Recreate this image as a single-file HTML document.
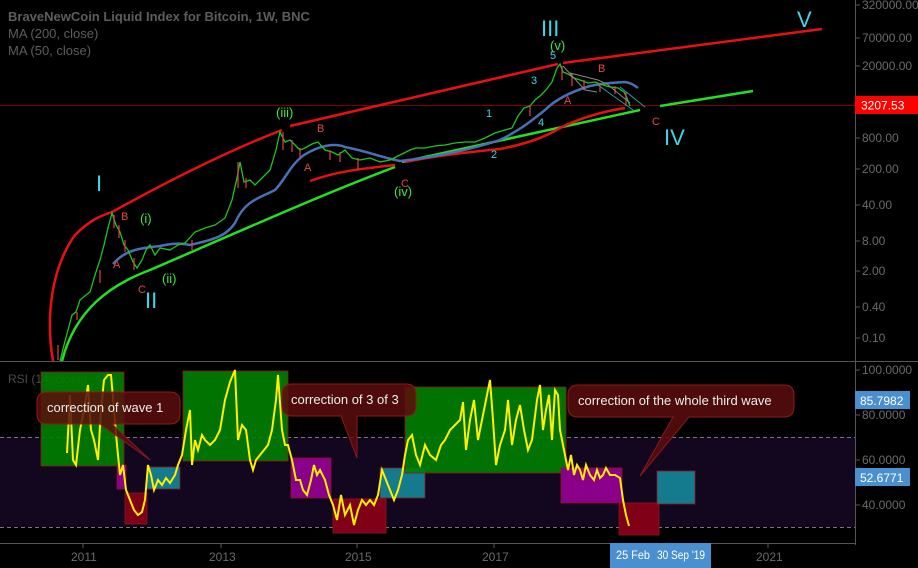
<!DOCTYPE html>
<html><head><meta charset="utf-8"><style>
html,body{margin:0;padding:0;background:#000;}
svg{display:block;font-family:"Liberation Sans",sans-serif;}
</style></head><body>
<svg width="918" height="568" viewBox="0 0 918 568" xmlns="http://www.w3.org/2000/svg">
<rect width="918" height="568" fill="#000"/>
<text x="8" y="21" font-size="13" fill="#5d5d5d" font-weight="bold">BraveNewCoin Liquid Index for Bitcoin, 1W, BNC</text>
<text x="8" y="38" font-size="13" fill="#5d5d5d">MA (200, close)</text>
<text x="8" y="55" font-size="13" fill="#5d5d5d">MA (50, close)</text>
<line x1="0" y1="105.5" x2="855" y2="105.5" stroke="#7a0000" stroke-width="1"/>
<line x1="855.5" y1="0" x2="855.5" y2="545" stroke="#555" stroke-width="1"/>
<line x1="0" y1="361.5" x2="918" y2="361.5" stroke="#555" stroke-width="1"/>
<line x1="0" y1="543.5" x2="855" y2="543.5" stroke="#555" stroke-width="1"/>
<g font-size="12" fill="#6a6a6a">
<text x="862" y="9">320000.00</text>
<text x="862" y="42">70000.00</text>
<text x="862" y="70">20000.00</text>
<text x="862" y="142">800.00</text>
<text x="862" y="173">200.00</text>
<text x="862" y="209">40.00</text>
<text x="862" y="245">8.00</text>
<text x="862" y="275">2.00</text>
<text x="862" y="311">0.40</text>
<text x="862" y="342">0.10</text>
<text x="862" y="374">100.0000</text>
<text x="862" y="419">80.0000</text>
<text x="862" y="464">60.0000</text>
<text x="862" y="509">40.0000</text>
</g>
<g stroke="#555"><line x1="855" y1="5" x2="860" y2="5"/><line x1="855" y1="38" x2="860" y2="38"/><line x1="855" y1="66" x2="860" y2="66"/><line x1="855" y1="138" x2="860" y2="138"/><line x1="855" y1="169" x2="860" y2="169"/><line x1="855" y1="205" x2="860" y2="205"/><line x1="855" y1="241" x2="860" y2="241"/><line x1="855" y1="271" x2="860" y2="271"/><line x1="855" y1="307" x2="860" y2="307"/><line x1="855" y1="338" x2="860" y2="338"/><line x1="855" y1="370" x2="860" y2="370"/><line x1="855" y1="415" x2="860" y2="415"/><line x1="855" y1="460" x2="860" y2="460"/><line x1="855" y1="505" x2="860" y2="505"/></g>
<rect x="855" y="96" width="63" height="18" fill="#f00"/>
<text x="861" y="109.5" font-size="12" fill="#fff">3207.53</text>
<rect x="855" y="391" width="55" height="18" fill="#4a8fcf"/>
<text x="860" y="405" font-size="12" fill="#fff">85.7982</text>
<rect x="855" y="468" width="55" height="18" fill="#4a8fcf"/>
<text x="860" y="482" font-size="12" fill="#fff">52.6771</text>
<g font-size="12" fill="#6a6a6a">
<text x="71" y="561">2011</text><text x="209" y="561">2013</text><text x="345" y="561">2015</text><text x="482" y="561">2017</text><text x="756" y="561">2021</text>
</g>
<g stroke="#555"><line x1="83" y1="543" x2="83" y2="548"/><line x1="221" y1="543" x2="221" y2="548"/><line x1="357" y1="543" x2="357" y2="548"/><line x1="494" y1="543" x2="494" y2="548"/><line x1="768" y1="543" x2="768" y2="548"/></g>
<rect x="610" y="543" width="101" height="25" fill="#4a8fcf"/>
<text x="616" y="559" font-size="12" fill="#fff" textLength="34" lengthAdjust="spacingAndGlyphs">25 Feb</text>
<text x="657" y="559" font-size="12" fill="#fff" textLength="48" lengthAdjust="spacingAndGlyphs">30 Sep '19</text>

<path d="M53,361 C46,320 50,270 75,235 C90,220 100,216 112,212 C170,180 230,150 282,130" fill="none" stroke="#e81010" stroke-width="2.5"/>
<path d="M290,126 L558,64" stroke="#e81010" stroke-width="2.5"/>
<path d="M563,63 L822,29" stroke="#e81010" stroke-width="2.5"/>
<path d="M62,361 C75,310 110,285 150,270 C220,240 320,195 395,167" fill="none" stroke="#22e022" stroke-width="2.5"/>
<path d="M402,162 L640,110 M660,106 L753,91" stroke="#22e022" stroke-width="2.5"/>
<path d="M310,181 C340,170 370,168 395,165 M405,162 C440,155 470,152 500,149 C520,145 540,140 560,128 C580,118 600,112 625,108" fill="none" stroke="#e81010" stroke-width="2.5"/>
<path d="M113,264 C125,250 140,248 160,246 C175,243 180,243 190,245 C210,240 225,238 235,223 C245,200 260,198 275,190 C285,180 290,165 304,155 C320,145 335,143 345,147 C370,152 380,157 400,161 C430,158 470,150 500,140 C520,130 530,122 545,110 C555,100 570,92 590,86 C610,82 615,83 625,82 C632,83 635,86 638,88" fill="none" stroke="#4a6fb5" stroke-width="2.5"/>
<polyline points="60,361 64,345 68,330 72,315 76,312 80,300 86,295 90,292 95,275 100,260 104,245 108,228 112,213 116,225 120,232 124,245 128,250 133,262 137,268 142,260 146,250 150,245 155,255 160,248 170,250 178,245 185,243 195,232 205,228 215,225 225,218 232,200 237,178 240,162 244,182 250,180 255,185 262,178 270,170 276,150 280,132 285,142 290,140 295,145 300,150 305,148 312,144 318,142 325,150 332,152 338,155 345,150 352,158 360,160 370,158 380,162 390,160 400,155 410,150 416,148 425,148 435,146 445,145 455,143 465,142 475,142 485,138 495,133 505,130 512,128 518,116 524,108 530,106 535,100 540,96 546,90 552,82 557,68 560,64 563,72 568,74 574,78 580,80 588,83 595,82 603,85 610,87 618,88 624,92 627,98 630,106" fill="none" stroke="#1ec51e" stroke-width="1.3"/>
<g stroke="#e04444" stroke-width="1.2">
<line x1="114" y1="215" x2="114" y2="228"/><line x1="119" y1="225" x2="119" y2="238"/><line x1="125" y1="240" x2="125" y2="252"/><line x1="134" y1="258" x2="134" y2="270"/><line x1="58" y1="345" x2="58" y2="360"/><line x1="77" y1="312" x2="77" y2="320"/><line x1="100" y1="270" x2="100" y2="283"/><line x1="238" y1="162" x2="238" y2="188"/><line x1="246" y1="178" x2="246" y2="188"/><line x1="283" y1="132" x2="283" y2="150"/><line x1="292" y1="140" x2="292" y2="152"/><line x1="300" y1="148" x2="300" y2="158"/><line x1="330" y1="150" x2="330" y2="160"/><line x1="340" y1="152" x2="340" y2="162"/><line x1="358" y1="158" x2="358" y2="170"/><line x1="192" y1="240" x2="192" y2="250"/><line x1="530" y1="105" x2="530" y2="116"/><line x1="562" y1="66" x2="562" y2="80"/><line x1="572" y1="74" x2="572" y2="86"/><line x1="584" y1="80" x2="584" y2="90"/><line x1="600" y1="83" x2="600" y2="92"/><line x1="615" y1="86" x2="615" y2="94"/><line x1="626" y1="92" x2="626" y2="106"/>
</g>
<path d="M563,66 L585,90 L597,92 M570,73 L598,80 L607,84 L630,103" fill="none" stroke="#888" stroke-width="1"/>
<path d="M620,87 L645,107 M598,85 L633,110" fill="none" stroke="#2a9b9b" stroke-width="1"/>

<g font-size="22" fill="#3dd6e6">
<text x="96" y="191">I</text><text x="145" y="308">II</text><text x="541" y="36">III</text><text x="664" y="145">IV</text><text x="797" y="27">V</text>
</g>
<g font-size="13" fill="#3ee83e">
<text x="140" y="223">(i)</text><text x="162" y="283">(ii)</text><text x="276" y="117">(iii)</text><text x="394" y="196">(iv)</text><text x="550" y="50">(v)</text>
</g>
<g font-size="11" fill="#e04848">
<text x="121" y="220">B</text><text x="113" y="268">A</text><text x="138" y="293">C</text><text x="317" y="132">B</text><text x="304" y="171">A</text><text x="401" y="187">C</text><text x="598" y="72">B</text><text x="564" y="104">A</text><text x="652" y="125">C</text>
</g>
<g font-size="11" fill="#3dd6e6">
<text x="486" y="117">1</text><text x="491" y="158">2</text><text x="531" y="84">3</text><text x="538" y="126">4</text><text x="550" y="59">5</text>
</g>

<rect x="0" y="437" width="855" height="90" fill="#13061f"/>
<line x1="0" y1="437.5" x2="855" y2="437.5" stroke="#777" stroke-dasharray="4,3"/>
<line x1="0" y1="527.5" x2="855" y2="527.5" stroke="#777" stroke-dasharray="4,3"/>
<text x="8" y="383" font-size="12" fill="#4a4a4a">RSI (14, close)</text>
<g stroke="#8b1a1a" stroke-width="0.8">
<rect x="41" y="372" width="83" height="94" fill="#008000" fill-opacity="0.9"/>
<rect x="117" y="465" width="9" height="24" fill="#8b008b"/>
<rect x="125" y="493" width="22" height="31" fill="#800017"/>
<rect x="147" y="467" width="33" height="22" fill="#147a8e"/>
<rect x="183" y="371" width="105" height="90" fill="#008000" fill-opacity="0.9"/>
<rect x="291" y="458" width="40" height="40" fill="#8b008b"/>
<rect x="333" y="499" width="53" height="34" fill="#800017"/>
<rect x="380" y="468" width="45" height="30" fill="#147a8e"/>
<rect x="405" y="387" width="161" height="86" fill="#008000" fill-opacity="0.9"/>
<rect x="561" y="468" width="61" height="35" fill="#8b008b"/>
<rect x="619" y="503" width="40" height="32" fill="#800017"/>
<rect x="657" y="471" width="38" height="33" fill="#147a8e"/>
</g>
<polyline points="67,453 70,395 73,460 76,465 80,430 84,410 88,385 91,430 94,440 98,460 101,410 104,380 108,375 111,375 114,410 117,445 120,475 123,465 126,490 130,500 134,510 138,515 142,512 145,500 148,465 151,475 154,490 158,480 162,485 166,478 170,483 175,475 178,465 182,455 186,430 190,410 192,465 195,440 198,450 202,435 205,440 210,445 215,440 220,430 225,400 230,382 235,370 238,440 242,425 246,430 250,460 253,470 256,460 260,455 264,450 268,445 272,430 276,400 278,375 282,430 285,445 288,445 292,460 296,480 300,480 303,490 307,495 311,480 314,465 317,475 320,470 325,480 329,495 333,505 337,520 341,495 345,515 350,505 354,525 358,510 362,500 366,505 370,500 374,505 378,495 382,470 386,480 390,490 394,500 398,490 402,475 405,455 408,440 412,435 416,455 420,465 425,445 430,455 436,460 441,445 445,440 450,430 455,425 460,420 463,402 466,450 470,420 474,400 478,440 482,420 486,400 490,380 493,420 496,465 500,445 505,430 508,400 512,445 516,420 520,405 524,430 528,450 532,440 537,400 540,385 543,430 546,410 549,395 552,440 555,390 558,395 560,430 563,445 566,460 568,470 571,455 574,475 577,465 580,470 583,480 586,465 590,475 594,480 597,470 600,478 603,475 606,468 610,475 615,475 620,478 623,500 626,515 629,526" fill="none" stroke="#ffef00" stroke-width="2"/>

<g fill="#5a0d0d" fill-opacity="0.85" stroke="#8b1a1a" stroke-width="1">
<path d="M47,392 H170 Q180,392 180,402 V414 Q180,424 170,424 H112 L150,460 L100,424 H47 Q37,424 37,414 V402 Q37,392 47,392 Z"/>
<path d="M292,384 H406 Q416,384 416,394 V406 Q416,416 406,416 H357 V458 L341,416 H292 Q282,416 282,406 V394 Q282,384 292,384 Z"/>
<path d="M578,385 H784 Q794,385 794,395 V407 Q794,417 784,417 H689 L640,476 L673,417 H578 Q568,417 568,407 V395 Q568,385 578,385 Z"/>
</g>
<g font-size="13" fill="#eee">
<text x="47" y="412">correction of wave 1</text>
<text x="291" y="404">correction of 3 of 3</text>
<text x="578" y="405">correction of the whole third wave</text>
</g>
</svg>
</body></html>
